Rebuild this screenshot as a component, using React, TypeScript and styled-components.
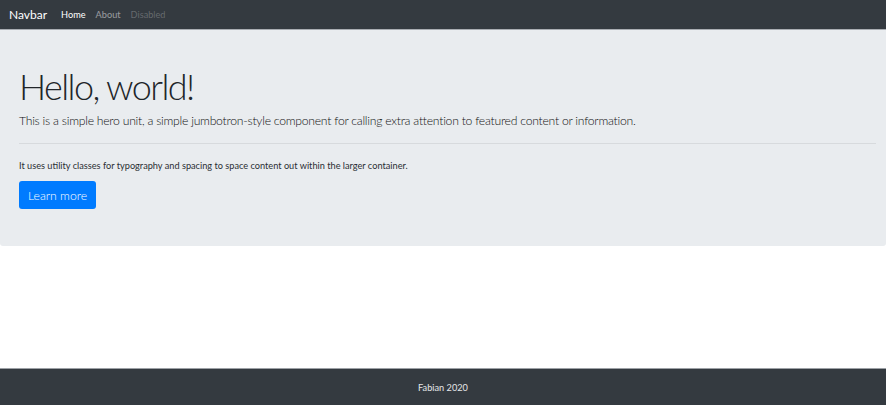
import React from "react";
import styled, { createGlobalStyle } from "styled-components";

const Global = createGlobalStyle`
  html, body { margin: 0; padding: 0; background: #fff; }
  body { font-family: "Lato", "Open Sans", sans-serif; color: #212529; }
  * { box-sizing: border-box; }
`;

const Page = styled.div`
  min-height: 405px;
  display: flex;
  flex-direction: column;
`;

const Navbar = styled.nav`
  height: 30px;
  background: #343a40;
  border-bottom: 1px solid #a9adb2;
  display: flex;
  align-items: center;
  padding: 0 9px;
`;

const Brand = styled.a`
  font-size: 12px;
  color: #fff;
  margin-right: 14px;
  text-decoration: none;
`;

const NavLink = styled.a<{ $state: "active" | "normal" | "disabled" }>`
  font-size: 9.2px;
  text-decoration: none;
  margin-right: 10px;
  color: ${(p) =>
    p.$state === "active"
      ? "#fff"
      : p.$state === "normal"
      ? "rgba(255,255,255,0.5)"
      : "rgba(255,255,255,0.25)"};
`;

const Jumbotron = styled.section`
  background: #e9ecef;
  border-radius: 0 0 3px 3px;
  padding: 31px 10px 37px 19px;
`;

const Display = styled.h1`
  margin: 0;
  font-size: 36px;
  font-weight: 300;
  letter-spacing: -1.6px;
  line-height: 51px;
  color: #212529;
`;

const Lead = styled.p`
  margin: 0;
  font-size: 12.2px;
  font-weight: 300;
  letter-spacing: -0.25px;
  line-height: 18px;
  color: #111;
`;

const Rule = styled.hr`
  border: 0;
  border-top: 1px solid #d7dadd;
  margin: 13px 0 15px 0;
`;

const Body = styled.p`
  margin: 0 0 8px;
  font-size: 9.2px;
  line-height: 14px;
  color: #2a2e33;
`;

const Button = styled.a`
  display: inline-flex;
  align-items: center;
  justify-content: center;
  width: 77px;
  height: 28px;
  background: #007bff;
  color: #fff;
  border-radius: 3px;
  font-size: 12.2px;
  font-weight: 300;
  text-decoration: none;
`;

const Spacer = styled.div`
  flex: 1;
`;

const Footer = styled.footer`
  height: 37px;
  background: #343a40;
  border-top: 1px solid #9da1a6;
  display: flex;
  align-items: center;
  justify-content: center;
  color: #e4e6e8;
  font-size: 9.2px;
`;

export default function App() {
  return (
    <Page>
      <Global />
      <Navbar>
        <Brand href="#">Navbar</Brand>
        <NavLink href="#" $state="active">Home</NavLink>
        <NavLink href="#" $state="normal">About</NavLink>
        <NavLink href="#" $state="disabled">Disabled</NavLink>
      </Navbar>
      <Jumbotron>
        <Display>Hello, world!</Display>
        <Lead>
          This is a simple hero unit, a simple jumbotron-style component for calling extra attention to featured content or information.
        </Lead>
        <Rule />
        <Body>It uses utility classes for typography and spacing to space content out within the larger container.</Body>
        <Button href="#">Learn more</Button>
      </Jumbotron>
      <Spacer />
      <Footer>Fabian 2020</Footer>
    </Page>
  );
}
